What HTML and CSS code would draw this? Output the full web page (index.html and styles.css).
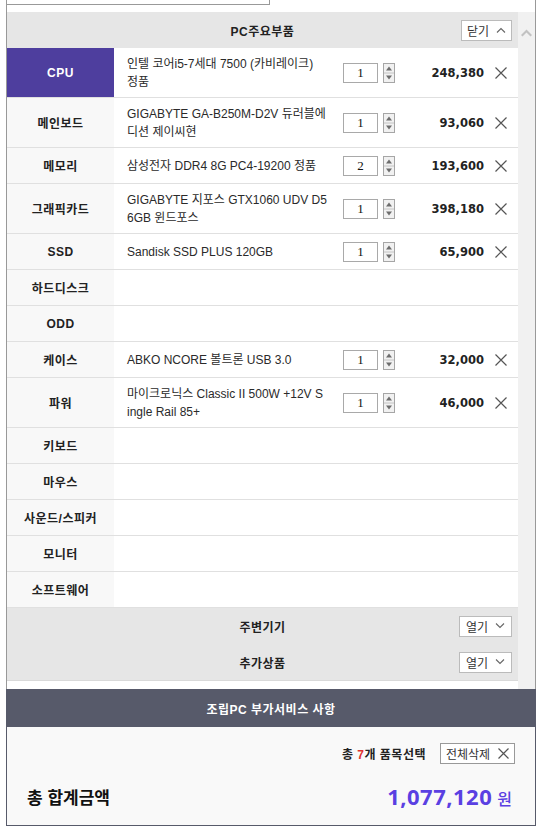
FILE: index.html
```html
<!DOCTYPE html>
<html lang="ko">
<head>
<meta charset="utf-8">
<title>PC주요부품</title>
<link rel="stylesheet" href="styles.css">
</head>
<body>
<div class="page">
  <div class="upper">
    <div class="stub"></div>
    <div class="scroller">
      <div class="content">
        <div class="head">
          <span class="head-title">PC주요부품</span>
          <span class="btn btn-toggle">닫기<svg class="chev" width="10" height="6" viewBox="0 0 10 6"><polyline points="1,5.5 5,1.5 9,5.5" fill="none" stroke="#666" stroke-width="1.1"/></svg></span>
        </div>

        <div class="row tall">
          <div class="label active">CPU</div>
          <div class="name">인텔 코어i5-7세대 7500 (카비레이크)<br>정품</div>
          <div class="qty"><span class="qty-input">1</span><svg class="spin" width="12" height="20" viewBox="0 0 12 20"><rect x="0.5" y="0.5" width="11" height="19" fill="#f1f1f1" stroke="#a6a6a6"/><line x1="1" y1="10" x2="11" y2="10" stroke="#c4c4c4"/><path d="M3 7.5 L6 3.5 L9 7.5Z" fill="#6d6d6d"/><path d="M3 12.5 L6 16.5 L9 12.5Z" fill="#6d6d6d"/></svg></div>
          <div class="price">248,380</div>
          <div class="del"><svg width="12" height="12" viewBox="0 0 12 12"><path d="M0.5 0.5 L11.5 11.5 M11.5 0.5 L0.5 11.5" stroke="#555" stroke-width="1.2"/></svg></div>
        </div>

        <div class="row tall">
          <div class="label">메인보드</div>
          <div class="name">GIGABYTE GA-B250M-D2V 듀러블에<br>디션 제이씨현</div>
          <div class="qty"><span class="qty-input">1</span><svg class="spin" width="12" height="20" viewBox="0 0 12 20"><rect x="0.5" y="0.5" width="11" height="19" fill="#f1f1f1" stroke="#a6a6a6"/><line x1="1" y1="10" x2="11" y2="10" stroke="#c4c4c4"/><path d="M3 7.5 L6 3.5 L9 7.5Z" fill="#6d6d6d"/><path d="M3 12.5 L6 16.5 L9 12.5Z" fill="#6d6d6d"/></svg></div>
          <div class="price">93,060</div>
          <div class="del"><svg width="12" height="12" viewBox="0 0 12 12"><path d="M0.5 0.5 L11.5 11.5 M11.5 0.5 L0.5 11.5" stroke="#555" stroke-width="1.2"/></svg></div>
        </div>

        <div class="row">
          <div class="label">메모리</div>
          <div class="name">삼성전자 DDR4 8G PC4-19200 정품</div>
          <div class="qty"><span class="qty-input">2</span><svg class="spin" width="12" height="20" viewBox="0 0 12 20"><rect x="0.5" y="0.5" width="11" height="19" fill="#f1f1f1" stroke="#a6a6a6"/><line x1="1" y1="10" x2="11" y2="10" stroke="#c4c4c4"/><path d="M3 7.5 L6 3.5 L9 7.5Z" fill="#6d6d6d"/><path d="M3 12.5 L6 16.5 L9 12.5Z" fill="#6d6d6d"/></svg></div>
          <div class="price">193,600</div>
          <div class="del"><svg width="12" height="12" viewBox="0 0 12 12"><path d="M0.5 0.5 L11.5 11.5 M11.5 0.5 L0.5 11.5" stroke="#555" stroke-width="1.2"/></svg></div>
        </div>

        <div class="row tall">
          <div class="label">그래픽카드</div>
          <div class="name">GIGABYTE 지포스 GTX1060 UDV D5<br>6GB 윈드포스</div>
          <div class="qty"><span class="qty-input">1</span><svg class="spin" width="12" height="20" viewBox="0 0 12 20"><rect x="0.5" y="0.5" width="11" height="19" fill="#f1f1f1" stroke="#a6a6a6"/><line x1="1" y1="10" x2="11" y2="10" stroke="#c4c4c4"/><path d="M3 7.5 L6 3.5 L9 7.5Z" fill="#6d6d6d"/><path d="M3 12.5 L6 16.5 L9 12.5Z" fill="#6d6d6d"/></svg></div>
          <div class="price">398,180</div>
          <div class="del"><svg width="12" height="12" viewBox="0 0 12 12"><path d="M0.5 0.5 L11.5 11.5 M11.5 0.5 L0.5 11.5" stroke="#555" stroke-width="1.2"/></svg></div>
        </div>

        <div class="row">
          <div class="label">SSD</div>
          <div class="name">Sandisk SSD PLUS 120GB</div>
          <div class="qty"><span class="qty-input">1</span><svg class="spin" width="12" height="20" viewBox="0 0 12 20"><rect x="0.5" y="0.5" width="11" height="19" fill="#f1f1f1" stroke="#a6a6a6"/><line x1="1" y1="10" x2="11" y2="10" stroke="#c4c4c4"/><path d="M3 7.5 L6 3.5 L9 7.5Z" fill="#6d6d6d"/><path d="M3 12.5 L6 16.5 L9 12.5Z" fill="#6d6d6d"/></svg></div>
          <div class="price">65,900</div>
          <div class="del"><svg width="12" height="12" viewBox="0 0 12 12"><path d="M0.5 0.5 L11.5 11.5 M11.5 0.5 L0.5 11.5" stroke="#555" stroke-width="1.2"/></svg></div>
        </div>

        <div class="row"><div class="label">하드디스크</div></div>
        <div class="row"><div class="label">ODD</div></div>

        <div class="row">
          <div class="label">케이스</div>
          <div class="name">ABKO NCORE 볼트론 USB 3.0</div>
          <div class="qty"><span class="qty-input">1</span><svg class="spin" width="12" height="20" viewBox="0 0 12 20"><rect x="0.5" y="0.5" width="11" height="19" fill="#f1f1f1" stroke="#a6a6a6"/><line x1="1" y1="10" x2="11" y2="10" stroke="#c4c4c4"/><path d="M3 7.5 L6 3.5 L9 7.5Z" fill="#6d6d6d"/><path d="M3 12.5 L6 16.5 L9 12.5Z" fill="#6d6d6d"/></svg></div>
          <div class="price">32,000</div>
          <div class="del"><svg width="12" height="12" viewBox="0 0 12 12"><path d="M0.5 0.5 L11.5 11.5 M11.5 0.5 L0.5 11.5" stroke="#555" stroke-width="1.2"/></svg></div>
        </div>

        <div class="row tall">
          <div class="label">파워</div>
          <div class="name">마이크로닉스 Classic II 500W +12V S<br>ingle Rail 85+</div>
          <div class="qty"><span class="qty-input">1</span><svg class="spin" width="12" height="20" viewBox="0 0 12 20"><rect x="0.5" y="0.5" width="11" height="19" fill="#f1f1f1" stroke="#a6a6a6"/><line x1="1" y1="10" x2="11" y2="10" stroke="#c4c4c4"/><path d="M3 7.5 L6 3.5 L9 7.5Z" fill="#6d6d6d"/><path d="M3 12.5 L6 16.5 L9 12.5Z" fill="#6d6d6d"/></svg></div>
          <div class="price">46,000</div>
          <div class="del"><svg width="12" height="12" viewBox="0 0 12 12"><path d="M0.5 0.5 L11.5 11.5 M11.5 0.5 L0.5 11.5" stroke="#555" stroke-width="1.2"/></svg></div>
        </div>

        <div class="row"><div class="label">키보드</div></div>
        <div class="row"><div class="label">마우스</div></div>
        <div class="row"><div class="label">사운드/스피커</div></div>
        <div class="row"><div class="label">모니터</div></div>
        <div class="row"><div class="label">소프트웨어</div></div>

        <div class="extra">
          <div class="extra-row">
            <span class="extra-title">주변기기</span>
            <span class="btn btn-open">열기<svg class="chev" width="10" height="6" viewBox="0 0 10 6"><polyline points="1,0.5 5,4.5 9,0.5" fill="none" stroke="#666" stroke-width="1.1"/></svg></span>
          </div>
          <div class="extra-row">
            <span class="extra-title">추가상품</span>
            <span class="btn btn-open">열기<svg class="chev" width="10" height="6" viewBox="0 0 10 6"><polyline points="1,0.5 5,4.5 9,0.5" fill="none" stroke="#666" stroke-width="1.1"/></svg></span>
          </div>
        </div>
      </div>
      <div class="scrollbar">
        <svg class="scroll-up" width="11" height="8" viewBox="0 0 11 8"><path d="M0 6 L5.5 0.5 L11 6 L9.5 7.5 L5.5 3.5 L1.5 7.5Z" fill="#c2c2c2"/></svg>
      </div>
    </div>
  </div>

  <div class="lower">
    <div class="band">조립PC 부가서비스 사항</div>
    <div class="summary">
      <div class="count-row">
        <span class="count">총 <em>7</em>개 품목선택</span>
        <span class="btn btn-clear">전체삭제<svg width="11" height="11" viewBox="0 0 11 11"><path d="M0.5 0.5 L10.5 10.5 M10.5 0.5 L0.5 10.5" stroke="#555" stroke-width="1.2"/></svg></span>
      </div>
      <div class="total-row">
        <span class="total-label">총 합계금액</span>
        <span class="total-value"><b class="total-num">1,077,120</b><span class="won">원</span></span>
      </div>
    </div>
  </div>
</div>
</body>
</html>
```

FILE: styles.css
```css
* { box-sizing: border-box; }

body {
  margin: 0;
  background: #fff;
  font-family: "Liberation Sans", "Noto Sans CJK KR", sans-serif;
  font-size: 12px;
  color: #222;
}

.page {
  margin-left: 6px;
  width: 530px;
}

.upper {
  height: 689px;
  border-left: 1px solid #999;
  border-right: 1px solid #999;
}

.stub {
  width: 263px;
  height: 5px;
  border-bottom: 1px solid #999;
  border-right: 1px solid #999;
}

.scroller {
  margin-top: 7px;
  height: 677px;
  display: flex;
}

.content {
  width: 511px;
}

.scrollbar {
  width: 17px;
  background: #f1f1f1;
  display: flex;
  justify-content: center;
  padding-top: 17px;
}

.scroll-up { display: block; }

.head {
  height: 36px;
  background: #e6e6e6;
  display: grid;
  grid-template-columns: 1fr auto 1fr;
  align-items: center;
}

.head-title {
  grid-column: 2;
  font-weight: bold;
  letter-spacing: 0.5px;
}

.btn {
  display: inline-flex;
  align-items: center;
  justify-content: center;
  gap: 7px;
  background: #fff;
  border: 1px solid #bbb;
  font-size: 12px;
  color: #333;
}

.btn-toggle {
  grid-column: 3;
  justify-self: end;
  margin-right: 6px;
  width: 51px;
  height: 21px;
}

.chev { display: block; }

.row {
  display: grid;
  grid-template-columns: 107px 223px 66px 81px 34px;
  height: 36px;
  border-bottom: 1px solid #e0e0e0;
}

.row.tall { height: 50px; }

.label {
  background: #f8f8f8;
  display: flex;
  align-items: center;
  justify-content: center;
  font-weight: bold;
  letter-spacing: 0.5px;
  color: #222;
}

.label.active {
  background: #4e3e9e;
  color: #fff;
}

.name {
  display: flex;
  flex-direction: column;
  justify-content: center;
  padding: 0 4px 0 13px;
  line-height: 18px;
  white-space: nowrap;
  color: #2a2a2a;
}

.qty {
  display: flex;
  align-items: center;
  gap: 5px;
  padding-left: 6px;
}

.qty-input {
  width: 35px;
  height: 20px;
  border: 1px solid #a9a9a9;
  background: #fff;
  font-family: "Liberation Serif", serif;
  font-size: 13px;
  line-height: 18px;
  text-align: center;
  color: #111;
}

.spin { display: block; }

.price {
  display: flex;
  align-items: center;
  justify-content: flex-end;
  font-family: "DejaVu Sans", sans-serif;
  font-weight: bold;
  font-size: 11.5px;
  color: #222;
}

.del {
  display: flex;
  align-items: center;
  padding-left: 11px;
}

.del svg { display: block; }

.extra {
  background: #e6e6e6;
  border-bottom: 1px solid #d9d9d9;
  height: 73px;
}

.extra-row {
  height: 36px;
  display: grid;
  grid-template-columns: 1fr auto 1fr;
  align-items: center;
}

.extra-title {
  grid-column: 2;
  font-weight: bold;
  letter-spacing: 0.5px;
}

.btn-open {
  grid-column: 3;
  justify-self: end;
  margin-right: 6px;
  width: 53px;
  height: 21px;
}

.lower {
  border-left: 1px solid #575a6a;
  border-right: 1px solid #575a6a;
  border-bottom: 1px solid #575a6a;
}

.band {
  height: 38px;
  background: #575a6a;
  color: #fff;
  font-weight: bold;
  letter-spacing: 0.5px;
  display: flex;
  align-items: center;
  justify-content: center;
}

.summary {
  height: 98px;
  background: #f9f9f9;
}

.count-row {
  display: flex;
  justify-content: flex-end;
  align-items: center;
  gap: 14px;
  padding: 16px 20px 0 0;
}

.count {
  font-weight: bold;
  letter-spacing: 0.5px;
  color: #222;
}

.count em {
  font-style: normal;
  color: #e0302f;
}

.btn-clear {
  width: 75px;
  height: 21px;
  border-color: #999;
  gap: 8px;
}

.btn-clear svg { display: block; }

.total-row {
  display: flex;
  justify-content: space-between;
  align-items: center;
  height: 30px;
  margin-top: 17px;
  padding: 0 23px 0 20px;
}

.total-label {
  font-family: "Noto Sans CJK KR", sans-serif;
  font-weight: bold;
  font-size: 17px;
  color: #111;
}

.total-value {
  display: flex;
  align-items: baseline;
  color: #5a40e2;
}

.total-num {
  font-family: "Noto Sans", "Liberation Sans", sans-serif;
  font-weight: bold;
  font-size: 22px;
  letter-spacing: 0.5px;
}

.won {
  margin-left: 5px;
  font-family: "Noto Sans CJK KR", sans-serif;
  font-weight: 500;
  font-size: 16px;
}
```
